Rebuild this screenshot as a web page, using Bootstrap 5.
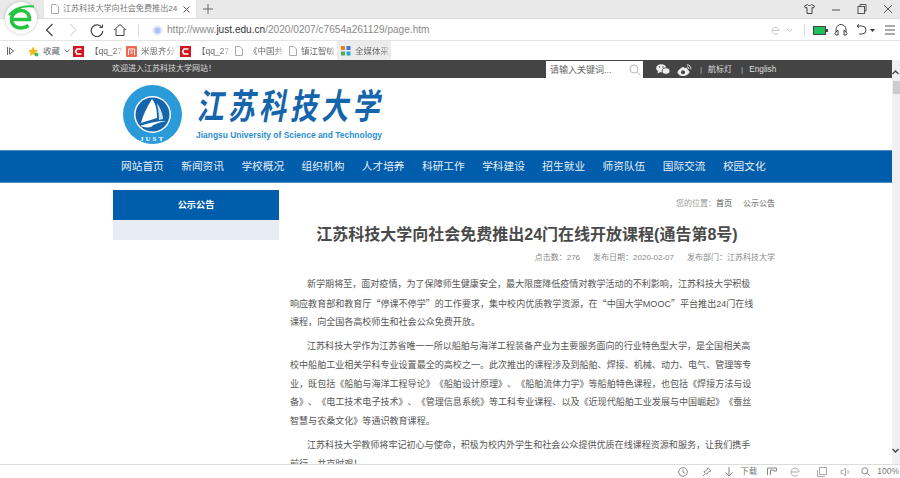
<!DOCTYPE html>
<html lang="zh-CN">
<head>
  <meta charset="UTF-8">
  <meta name="viewport" content="width=device-width, initial-scale=1">
  <title>江苏科技大学向社会免费推出24门在线开放课程</title>
  <link href="https://cdn.jsdelivr.net/npm/bootstrap@5.3.0/dist/css/bootstrap.min.css" rel="stylesheet">
  <style>
    html, body { height: 478px; overflow: hidden; }
    body { font-family: "Liberation Sans", "Noto Sans CJK SC", sans-serif; color: #555; font-size: 9px; width: 900px; position: relative; text-spacing-trim: space-all; }
    svg { display: block; flex: none; }
    .mgl-2 { margin-left: 2px; } .mgl-3 { margin-left: 3px; } .mgl-6 { margin-left: 6px; } .mgl-7 { margin-left: 7px; }
    .mgl-8 { margin-left: 8px; } .mgl-9 { margin-left: 9px; } .mgl-10 { margin-left: 10px; } .mgl-11 { margin-left: 11px; }
    .mgl-12 { margin-left: 12px; } .mgl-13 { margin-left: 13px; } .mgl-14 { margin-left: 14px; } .mgl-17 { margin-left: 17px; }
    .tab-row { height: 18px; background: #e9e9e9; padding-left: 44px; }
    .tab-item { width: 152px; height: 18px; background: #fff; font-size: 8.1px; color: #777; padding-left: 7px; white-space: nowrap; }
    .tab-item span { margin-left: 4px; }
    .win-btns { margin-left: auto; gap: 16px; padding-right: 7px; }
    .tool-row { height: 23px; background: #fff; border-top: 1px solid #ddd; border-bottom: 1px solid #e4e4e4; padding: 1px 0 0 43px; }
    .url-text { font-size: 10.1px; color: #8a8a8a; margin-left: 4px; }
    .url-text b { color: #333; font-weight: 400; }
    .v-sep { width: 1px; height: 13px; background: #ddd; }
    .tool-right { margin-left: auto; padding-right: 5px; }
    .fav-row { height: 19px; background: #fff; padding-left: 7px; font-size: 8.5px; color: #666; white-space: nowrap; }
    .fav-item { height: 19px; padding-top: 1px; gap: 4px; }
    .fav-item span { -webkit-mask-image: linear-gradient(90deg, #000 75%, rgba(0,0,0,.25)); mask-image: linear-gradient(90deg, #000 75%, rgba(0,0,0,.25)); }
    .fav-star { width: 45px; margin-left: 14px; }
    .fav-star span { -webkit-mask-image: none; mask-image: none; }
    .fav-w48 { width: 48px; } .fav-w53 { width: 53px; } .fav-w54 { width: 54px; } .fav-w55 { width: 55px; }
    .fav-active { background: #ececec; padding-left: 4px; }
    .top-strip { height: 18px; background: #444; color: #ddd; padding-left: 112px; font-size: 8px; white-space: nowrap; }
    .search-box { width: 97px; height: 17px; background: #fff; margin-left: auto; margin-top: 1px; padding: 3px 2px 0 4px; color: #666; font-size: 9px; }
    .top-links { width: 132px; margin-right: 117px; padding-left: 13px; padding-top: 1px; }
    .top-links em { font-style: normal; color: #bbb; }
    .top-en { font-size: 8.3px; }
    .page-wrap { height: 404px; overflow: hidden; }
    .page-scroll { width: 892px; flex: none; }
    .side-track { width: 8px; background: #f0f0f0; padding-top: 10px; padding-bottom: 11px; }
    .side-thumb { width: 7px; height: 13px; background: #ccc; margin-top: 6px; margin-left: 1px; }
    .side-down { margin-top: auto; }
    .logo-band { height: 72px; padding: 7px 0 0 123px; gap: 14px; }
    .brand-cn { font-family: "Noto Sans CJK SC", sans-serif; font-size: 27px; line-height: 38px; font-weight: 700; color: #1565ad; letter-spacing: 4.2px; white-space: nowrap; transform: skewX(-10deg) scaleY(1.3); margin: 1px 0 0 3px; }
    .brand-en { font-size: 8.45px; line-height: 11px; font-weight: 700; color: #2b8ed0; white-space: nowrap; margin-top: 6px; }
    .main-nav { height: 33px; background: #005dab; border-top: 1px solid #4d8dc4; border-bottom: 1px solid #4d8dc4; padding-left: 121px; color: #e6eef6; font-size: 10.7px; }
    .main-nav div { width: 60.2px; white-space: nowrap; }
    .body-wrap { width: 662px; margin-left: 113px; padding-top: 7px; }
    .side-col { width: 166px; flex: none; }
    .side-head { height: 30px; background: #005dab; color: #fff; font-weight: 700; font-size: 9.2px; line-height: 30px; }
    .side-sub { height: 20px; background: #e6edf4; }
    .article-col { flex: 1; padding-left: 11px; }
    .crumb { height: 24px; line-height: 27px; text-align: right; color: #999; font-size: 8px; }
    .crumb span { color: #555; }
    .crumb span + span { margin-left: 11px; }
    .art-title { font-size: 16px; line-height: 20px; font-weight: 700; color: #4a4a4a; margin: 11px 0 0 0; text-align: center; padding-right: 11px; white-space: nowrap; }
    .art-meta { text-align: right; font-size: 8px; line-height: 12px; color: #888; margin-top: 7px; }
    .art-meta span + span { margin-left: 13px; }
    .art-body { margin-top: 11px; font-size: 9.06px; line-height: 18.6px; color: #555; }
    .art-body p { text-indent: 17px; margin: 0 0 5.6px 0; white-space: nowrap; }
    .cn-q { font-family: "Noto Sans CJK SC", sans-serif; }
    .status-row { height: 14px; background: #fff; border-top: 1px solid #ddd; color: #777; font-size: 8.5px; padding-right: 1px; white-space: nowrap; }
    .app-logo { position: absolute; left: 5px; top: 2px; width: 32px; height: 32px; border-radius: 50%; background: #fff; box-shadow: 0 0 3px rgba(0,0,0,.25); }
  </style>
</head>
<body>

  <div class="tab-row d-flex align-items-center">
    <div class="tab-item d-flex align-items-center">
      <svg width="8" height="10" viewBox="0 0 8 10" fill="none" stroke="#aaa"><path d="M.5.5h4.500l2.500 2.500v6.500h-7z"/></svg>
      <span>江苏科技大学向社会免费推出24</span>
      <svg class="ms-auto" width="7" height="7" viewBox="0 0 7 7" stroke="#555"><path d="M.5.500l6 6M6.500.500l-6 6"/></svg>
      <div class="mgl-6"></div>
    </div>
    <svg class="mgl-7" width="10" height="10" viewBox="0 0 10 10" stroke="#666"><path d="M5 0v10M0 5h10"/></svg>
    <div class="win-btns d-flex align-items-center">
      <svg width="11" height="10" viewBox="0 0 11 10" fill="none" stroke="#444"><path d="M3.500.500L.5 2l1 2 1.500-.5v6h5v-6l1.500.5 1-2L7.500.500c-.5 1.500-3.500 1.500-4 0z"/></svg>
      <svg width="10" height="10" viewBox="0 0 10 10" stroke="#555"><path d="M1 6h8"/></svg>
      <svg width="10" height="10" viewBox="0 0 10 10" fill="none" stroke="#555"><rect x="1" y="2.500" width="6.500" height="7"/><path d="M3 2.500v-2h6v6.500H7.500"/></svg>
      <svg width="10" height="10" viewBox="0 0 10 10" stroke="#555"><path d="M1 1l8 8M9 1l-8 8"/></svg>
    </div>
  </div>

  <div class="tool-row d-flex align-items-center">
    <svg width="14" height="14" viewBox="0 0 14 14" fill="none" stroke="#444" stroke-width="1.200"><path d="M9.500 1L3.500 7l6 6"/></svg>
    <svg class="mgl-9" width="14" height="14" viewBox="0 0 14 14" fill="none" stroke="#ddd" stroke-width="1.200"><path d="M4 1l6 6-6 6"/></svg>
    <svg class="mgl-10" width="14" height="14" viewBox="0 0 14 14" fill="none" stroke="#444" stroke-width="1.200"><path d="M11.800 4.500A5.800 5.800 0 1 0 12.800 8"/><path d="M9.500 4.500h3v-3" stroke-width="1"/></svg>
    <svg class="mgl-9" width="14" height="14" viewBox="0 0 14 14" fill="none" stroke="#444"><path d="M1 7l6-5.500L13 7M3 6v6.500h8V6"/></svg>
    <div class="v-sep mgl-11"></div>
    <svg class="mgl-13" width="11" height="11" viewBox="0 0 11 11"><circle cx="5.500" cy="5.500" r="5" fill="#dfe8fa"/><circle cx="5.500" cy="5.500" r="3" fill="#a9c3f3"/></svg>
    <div class="url-text">http://www.<b>just.edu.cn</b>/2020/0207/c7654a261129/page.htm</div>
    <div class="tool-right d-flex align-items-center">
      <svg width="9" height="9" viewBox="0 0 9 9" fill="none" stroke="#c4c4c4"><path d="M1.500 4.500h6.500a3.500 3.500 0 1 0-1 2.700"/></svg>
      <svg class="mgl-6" width="7" height="5" viewBox="0 0 7 5" fill="none" stroke="#c4c4c4"><path d="M1 1l2.500 2.500L6 1"/></svg>
      <div class="v-sep mgl-11"></div>
      <svg class="mgl-8" width="15" height="9" viewBox="0 0 15 9"><rect x=".5" y=".5" width="12" height="8" fill="#1fc05a" stroke="#444"/><rect x="13" y="3" width="2" height="3" fill="#444"/></svg>
      <svg class="mgl-6" width="14" height="14" viewBox="0 0 14 14" fill="none" stroke="#444"><path d="M2 9V6.500a5 5 0 0 1 10 0V9"/><path d="M2 9l2-2v5H2l-1-1.500zM12 9l-2-2v5h2l1-1.500z"/></svg>
      <svg class="mgl-8" width="11" height="12" viewBox="0 0 11 12" fill="none" stroke="#444"><path d="M1 2h5a4 4 0 0 1 0 8H3"/><path d="M3 .3L1 2l2 1.700"/></svg>
      <svg class="mgl-3" width="5" height="3" viewBox="0 0 5 3" fill="#333"><path d="M0 0h5L2.500 3z"/></svg>
      <svg class="mgl-10" width="10" height="10" viewBox="0 0 10 10" stroke="#555"><path d="M0 1h10M0 5h10M0 9h10"/></svg>
    </div>
  </div>

  <div class="fav-row d-flex align-items-center">
    <svg width="7" height="8" viewBox="0 0 7 8" fill="none" stroke="#666"><path d="M.5 0v8M2.500 .8L6.500 4l-4 3.200z"/></svg>
    <div class="fav-item fav-star d-flex align-items-center">
      <svg width="11" height="11" viewBox="0 0 11 11"><path d="M5 .5l1.500 3.300 3.500.4-2.600 2.400.7 3.500L5 8.300 1.900 10.100l.7-3.500L0 4.200l3.500-.4z" fill="#f5b61d"/><circle cx="8.500" cy="8.500" r="2" fill="#35c552"/></svg>
      <span>收藏</span>
      <svg width="6" height="4" viewBox="0 0 6 4" fill="none" stroke="#777"><path d="M.5.5L3 3 5.500.5"/></svg>
    </div>
    <div class="fav-item fav-w53 d-flex align-items-center">
      <svg width="11" height="11" viewBox="0 0 11 11"><rect width="11" height="11" fill="#d2151e"/><path d="M8.500 3H4L2.500 5.500 4 8h4.500" fill="none" stroke="#fff" stroke-width="1.600"/></svg>
      <span class="mgl-2">【qq_27</span>
    </div>
    <div class="fav-item fav-w54 d-flex align-items-center">
      <svg width="11" height="11" viewBox="0 0 11 11"><rect width="11" height="11" rx="1" fill="#ee6a55"/><path d="M2.500 9V3h6v6M4.500 5h2M4.500 7h2" stroke="#fff" fill="none"/></svg>
      <span>米思齐分</span>
    </div>
    <div class="fav-item fav-w55 d-flex align-items-center">
      <svg width="11" height="11" viewBox="0 0 11 11"><rect width="11" height="11" fill="#d2151e"/><path d="M8.500 3H4L2.500 5.500 4 8h4.500" fill="none" stroke="#fff" stroke-width="1.600"/></svg>
      <span class="mgl-2">【qq_27</span>
    </div>
    <div class="fav-item fav-w54 d-flex align-items-center">
      <svg width="8" height="10" viewBox="0 0 8 10" fill="none" stroke="#aaa"><path d="M.5.5h4.500l2.500 2.500v6.500h-7z"/></svg>
      <span class="mgl-2">《中国共</span>
    </div>
    <div class="fav-item fav-w48 d-flex align-items-center">
      <svg width="8" height="10" viewBox="0 0 8 10" fill="none" stroke="#aaa"><path d="M.5.5h4.500l2.500 2.500v6.500h-7z"/></svg>
      <span>镇江智敏</span>
    </div>
    <div class="fav-item fav-w54 fav-active d-flex align-items-center">
      <svg width="10" height="10" viewBox="0 0 10 10"><rect width="4" height="4" fill="#ef7d22"/><rect x="5.500" width="4" height="4" fill="#3b78d8"/><rect y="5.500" width="4" height="4" fill="#4cae50"/><rect x="5.500" y="5.500" width="4" height="4" fill="#22a7c9"/></svg>
      <span>全媒体采</span>
    </div>
  </div>

  <div class="d-flex page-wrap">
    <div class="page-scroll">
      <div class="top-strip d-flex align-items-center">
        <div>欢迎进入江苏科技大学网站！</div>
        <div class="search-box d-flex align-items-start justify-content-between">
          <span>请输入关键词...</span>
          <svg width="12" height="12" viewBox="0 0 12 12" fill="none" stroke="#bbb"><circle cx="5" cy="5" r="4"/><path d="M8 8l3.500 3.500"/></svg>
        </div>
        <div class="top-links d-flex align-items-center">
          <svg width="14" height="11" viewBox="0 0 14 11" fill="#eee"><ellipse cx="5.200" cy="4.200" rx="5" ry="4"/><path d="M2 7l-.5 2.500L4.500 8z"/><ellipse cx="10" cy="7" rx="4" ry="3.300" stroke="#444" stroke-width=".8"/><circle cx="3.500" cy="3" r=".7" fill="#444"/><circle cx="7" cy="3" r=".7" fill="#444"/></svg>
          <svg class="mgl-7" width="15" height="12" viewBox="0 0 15 12" fill="none" stroke="#eee"><path d="M6 3.500C3.500 4.500 1 6.500 1 8.500s2.500 3 5 3 6-1.500 6-3.500c0-1.500-1.500-2-2-2 .5-1.500-.5-2.500-2-1.500z" fill="#eee"/><circle cx="6" cy="8.300" r="2" fill="#444" stroke="none"/><path d="M10 .8c2.500 0 4.200 2 3.800 4.500M10 2.800c1.200 0 2 1 1.700 2.200"/></svg>
          <em class="mgl-8">|</em>
          <span class="mgl-6">航标灯</span>
          <em class="mgl-9">|</em>
          <span class="top-en mgl-6">English</span>
        </div>
      </div>

      <div class="logo-band d-flex">
        <svg width="59" height="59" viewBox="0 0 59 59">
          <circle cx="29.500" cy="29.500" r="29.500" fill="#2a9bd8"/>
          <circle cx="29.500" cy="29.500" r="18.500" fill="#fff"/>
          <circle cx="29.500" cy="29.500" r="17" fill="#1565ad"/>
          <path d="M29 14C24 22 20 30 18 38c6-2 12-4 16-5C34 25 33 19 29 14z" fill="#fff"/>
          <path d="M34 18c4 6 6 12 6 16l-4 1c0-6-1-11-2-17z" fill="#cfe3f4"/>
          <path d="M17 41c8-3 17-5 26-5-8 2-12 3-15 6-4 1-8 0-11-1z" fill="#fff"/>
          <text x="29.500" y="56" font-family="Liberation Serif, serif" font-size="7" font-weight="700" fill="#fff" text-anchor="middle" letter-spacing="2">JUST</text>
        </svg>
        <div>
          <div class="brand-cn">江苏科技大学</div>
          <div class="brand-en">Jiangsu University of Science and Technology</div>
        </div>
      </div>

      <div class="main-nav d-flex align-items-center">
        <div>网站首页</div><div>新闻资讯</div><div>学校概况</div><div>组织机构</div><div>人才培养</div><div>科研工作</div><div>学科建设</div><div>招生就业</div><div>师资队伍</div><div>国际交流</div><div>校园文化</div>
      </div>

      <div class="body-wrap d-flex">
        <div class="side-col">
          <div class="side-head text-center">公示公告</div>
          <div class="side-sub"></div>
        </div>
        <div class="article-col">
          <div class="crumb">您的位置：<span>首页</span><span>公示公告</span></div>
          <h1 class="art-title">江苏科技大学向社会免费推出24门在线开放课程(通告第8号)</h1>
          <div class="art-meta"><span>点击数：276</span><span>发布日期：2020-02-07</span><span>发布部门：江苏科技大学</span></div>
          <div class="art-body">
            <p>新学期将至，面对疫情，为了保障师生健康安全，最大限度降低疫情对教学活动的不利影响，江苏科技大学积极<br>响应教育部和教育厅<span class="cn-q">“</span>停课不停学<span class="cn-q">”</span>的工作要求，集中校内优质教学资源，在<span class="cn-q">“</span>中国大学MOOC<span class="cn-q">”</span>平台推出24门在线<br>课程，向全国各高校师生和社会公众免费开放。</p>
            <p>江苏科技大学作为江苏省唯一一所以船舶与海洋工程装备产业为主要服务面向的行业特色型大学，是全国相关高<br>校中船舶工业相关学科专业设置最全的高校之一。此次推出的课程涉及到船舶、焊接、机械、动力、电气、管理等专<br>业，既包括《船舶与海洋工程导论》《船舶设计原理》、《船舶流体力学》等船舶特色课程，也包括《焊接方法与设<br>备》、《电工技术电子技术》、《管理信息系统》等工科专业课程、以及《近现代船舶工业发展与中国崛起》《蚕丝<br>智慧与农桑文化》等通识教育课程。</p>
            <p>江苏科技大学教师将牢记初心与使命，积极为校内外学生和社会公众提供优质在线课程资源和服务，让我们携手<br>前行，共克时艰！</p>
          </div>
        </div>
      </div>
    </div>
    <div class="side-track d-flex flex-column">
      <svg width="7" height="5" viewBox="0 0 7 5" fill="none" stroke="#444" stroke-width="1.300"><path d="M.5 4L3.500 1l3 3"/></svg>
      <div class="side-thumb"></div>
      <svg class="side-down" width="7" height="5" viewBox="0 0 7 5" fill="none" stroke="#444" stroke-width="1.300"><path d="M.5 1l3 3 3-3"/></svg>
    </div>
  </div>

  <div class="status-row d-flex align-items-center justify-content-end">
    <svg width="10" height="10" viewBox="0 0 10 10" fill="none" stroke="#888"><circle cx="5" cy="5" r="4.300"/><path d="M5 2.500V5l2 1.500"/></svg>
    <svg class="mgl-14" width="10" height="10" viewBox="0 0 10 10" fill="none" stroke="#888"><path d="M6 .8l3 3-2.500 1-2 2.500L2 4.800l2.500-1.500zM3 7L.8 9.200"/></svg>
    <svg class="mgl-12" width="10" height="10" viewBox="0 0 10 10" fill="none" stroke="#888"><path d="M5 0v9M1.500 5.500L5 9l3.500-3.500"/></svg>
    <span class="mgl-6">下载</span>
    <svg class="mgl-10" width="10" height="9" viewBox="0 0 10 9" fill="none" stroke="#888"><path d="M.5 1h9v3h-3v-1h-3v5M.5 1v7"/></svg>
    <svg class="mgl-13" width="10" height="10" viewBox="0 0 10 10" fill="none" stroke="#aaa"><path d="M1.500 5h7.500a4 4 0 1 0-1 2.800"/></svg>
    <svg class="mgl-17" width="10" height="10" viewBox="0 0 10 10" fill="none" stroke="#aaa"><rect x="2.500" y=".5" width="7" height="7"/><path d="M.5 3v6.500H8"/></svg>
    <svg class="mgl-13" width="10" height="10" viewBox="0 0 10 10" fill="none" stroke="#aaa"><path d="M1 3.500h2L5.500 1v8L3 6.500H1zM7.500 3c1 1 1 3 0 4"/></svg>
    <svg class="mgl-11" width="9" height="9" viewBox="0 0 9 9" fill="none" stroke="#888"><circle cx="3.800" cy="3.800" r="3"/><path d="M6 6l2.700 2.700"/></svg>
    <span class="mgl-7">100%</span>
  </div>

  <div class="app-logo d-flex align-items-center justify-content-center">
    <svg width="28" height="28" viewBox="0 0 28 28" fill="none" stroke="#22c53d" stroke-width="3.500">
      <path d="M5.500 15.500h17c0-6-4-9-8.500-9s-9.500 3.500-9.500 9 4.500 8.500 9.500 8.500c3 0 5.500-1 7.500-2.500"/>
      <path d="M2 11C7 5 16 1 27 2.500" stroke-width="2"/>
    </svg>
  </div>

  <script src="https://cdn.jsdelivr.net/npm/bootstrap@5.3.0/dist/js/bootstrap.bundle.min.js"></script>
</body>
</html>
